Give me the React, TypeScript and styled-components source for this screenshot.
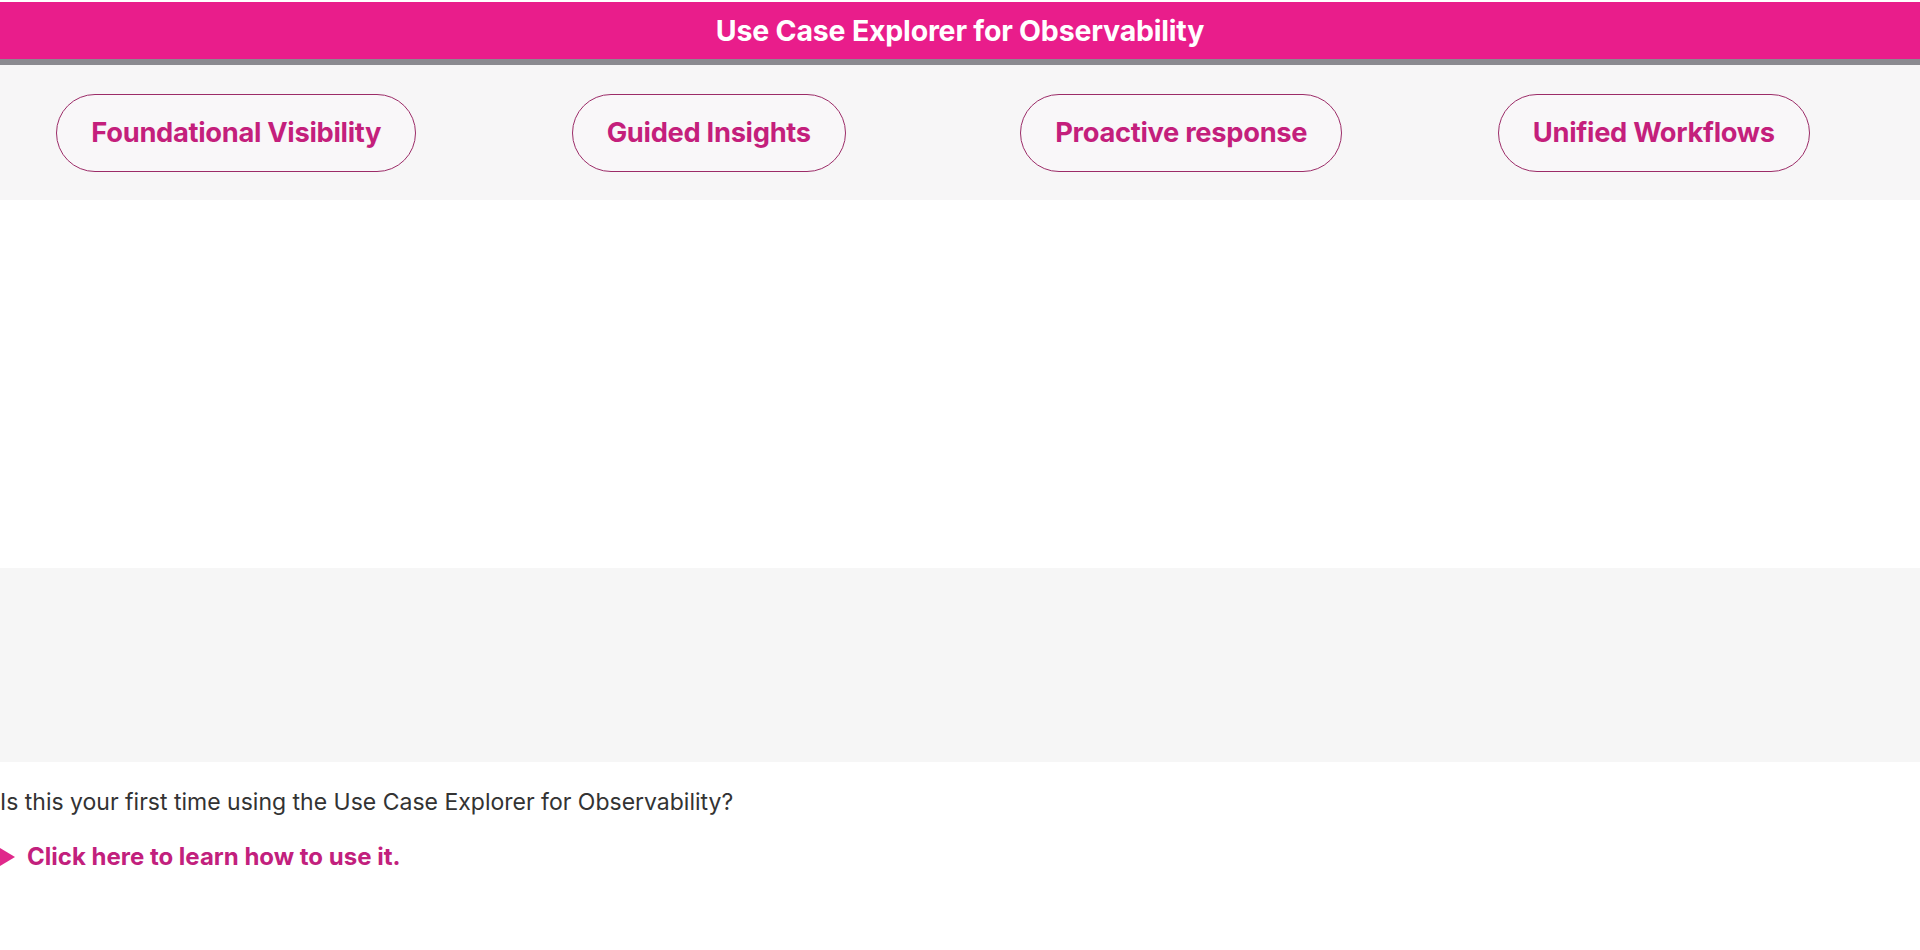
import React from "react";
import styled, { createGlobalStyle } from "styled-components";

const GlobalStyle = createGlobalStyle`
  body {
    margin: 0;
    background: #ffffff;
    font-family: Inter, "Liberation Sans", Arial, sans-serif;
  }
`;

const Page = styled.div`
  width: 100%;
  min-height: 950px;
  padding-top: 2px;
  box-sizing: border-box;
`;

const TitleBar = styled.header`
  height: 57px;
  background: #e91d8b;
  border-bottom: 6px solid #8b8a90;
  display: flex;
  align-items: center;
  justify-content: center;
  color: #ffffff;
  font-size: 28.5px;
  font-weight: 700;
  letter-spacing: -0.2px;
`;

const NavBand = styled.nav`
  height: 135px;
  background: #f7f6f7;
  display: grid;
  grid-template-columns: repeat(4, 1fr);
  align-items: center;
  justify-items: center;
  padding-right: 30px;
`;

const Pill = styled.button`
  height: 78px;
  padding: 0 34px;
  border: 1.6px solid #9c2c68;
  border-radius: 40px;
  background: #f9f7f9;
  color: #c41f7c;
  font-family: inherit;
  font-size: 27.3px;
  font-weight: 700;
  letter-spacing: -0.3px;
  cursor: pointer;
`;

const Blank = styled.section`
  height: 368px;
  background: #ffffff;
`;

const GreyPanel = styled.section`
  height: 194px;
  background: #f6f6f6;
`;

const Intro = styled.p`
  margin: 25px 0 0;
  font-size: 23px;
  line-height: 30px;
  color: #333333;
`;

const HelpToggle = styled.a`
  display: flex;
  align-items: center;
  gap: 12px;
  margin-top: 25px;
  color: #c2207d;
  font-size: 24px;
  font-weight: 700;
  line-height: 30px;
  text-decoration: none;
  cursor: pointer;
`;

const Arrow = styled.span`
  width: 0;
  height: 0;
  border-top: 9px solid transparent;
  border-bottom: 9px solid transparent;
  border-left: 15px solid #e0288b;
`;

const useCases = [
  "Foundational Visibility",
  "Guided Insights",
  "Proactive response",
  "Unified Workflows",
];

const App = () => {
  return (
    <Page>
      <GlobalStyle />
      <TitleBar>Use Case Explorer for Observability</TitleBar>
      <NavBand>
        {useCases.map((name) => (
          <Pill key={name}>{name}</Pill>
        ))}
      </NavBand>
      <Blank />
      <GreyPanel />
      <Intro>Is this your first time using the Use Case Explorer for Observability?</Intro>
      <HelpToggle>
        <Arrow />
        Click here to learn how to use it.
      </HelpToggle>
    </Page>
  );
};

export default App;
